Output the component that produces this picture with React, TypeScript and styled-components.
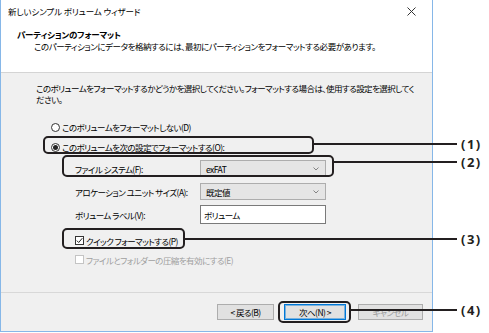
import styled, { createGlobalStyle, css } from "styled-components";

const GlobalStyle = createGlobalStyle`
  html, body {
    margin: 0;
    padding: 0;
    background: #ffffff;
  }
  body {
    font-family: "Noto Sans CJK JP", "Noto Sans", sans-serif;
    color: #000000;
  }
`;

const uiText = css`
  font-size: 8.5px;
  line-height: 12px;
  letter-spacing: -0.55px;
  font-feature-settings: "palt";
  white-space: nowrap;
`;

const Stage = styled.div`
  position: relative;
  width: 489px;
  height: 333px;
  overflow: hidden;
  background: #ffffff;
`;

const Window = styled.div`
  width: 433px;
  height: 332px;
  box-sizing: border-box;
  border: 1px solid #86b7e8;
  border-top: none;
  display: flex;
  flex-direction: column;
  background: #ffffff;
`;

const Header = styled.div`
  height: 73px;
  box-sizing: border-box;
  border-bottom: 1px solid #d4d4d4;
  padding: 5px 0 0 7px;
`;

const TitleRow = styled.div`
  ${uiText};
  letter-spacing: -0.1px;
  display: flex;
  align-items: center;
  justify-content: space-between;
  padding-right: 16px;
`;

const CloseIcon = () => (
  <svg width="9" height="9" viewBox="0 0 9 9">
    <path d="M0.5 0.5 L8.5 8.5 M8.5 0.5 L0.5 8.5" stroke="#333" strokeWidth="1" />
  </svg>
);

const Heading = styled.div`
  ${uiText};
  letter-spacing: -0.2px;
  margin-top: 11px;
  padding-left: 9px;
  font-weight: bold;
`;

const SubText = styled.div`
  ${uiText};
  letter-spacing: -0.45px;
  padding-left: 26px;
`;

const Body = styled.div`
  flex: 1;
  background: #f0f0f0;
  padding: 10px 0 0 35px;
`;

const Intro = styled.p`
  ${uiText};
  line-height: 11px;
  margin: 0;
`;

const RadioList = styled.div`
  margin: 12px 0 0 15px;
`;

const OptionRow = styled.label<{ $h?: number; $disabled?: boolean }>`
  ${uiText};
  display: flex;
  align-items: center;
  gap: 2px;
  height: ${(p) => p.$h ?? 20}px;
  color: ${(p) => (p.$disabled ? "#a0a0a0" : "#000")};
`;

const RadioDot = styled.span<{ $checked?: boolean }>`
  width: 9px;
  height: 9px;
  box-sizing: border-box;
  border: 1px solid #333;
  border-radius: 50%;
  background: #fff;
  display: flex;
  align-items: center;
  justify-content: center;
  &::after {
    content: "";
    width: 5px;
    height: 5px;
    border-radius: 50%;
    background: ${(p) => (p.$checked ? "#222" : "transparent")};
  }
`;

const CheckBox = styled.span<{ $disabled?: boolean }>`
  width: 9px;
  height: 9px;
  box-sizing: border-box;
  border: 1px solid ${(p) => (p.$disabled ? "#c4c4c4" : "#333")};
  background: #fff;
  display: flex;
  align-items: center;
  justify-content: center;
`;

const CheckMark = () => (
  <svg width="7" height="7" viewBox="0 0 7 7">
    <path d="M0.8 3.6 L2.7 5.5 L6.3 1.2" fill="none" stroke="#222" strokeWidth="1" />
  </svg>
);

const SettingsGrid = styled.div`
  margin-left: 39px;
  display: grid;
  grid-template-columns: 125px 126px;
  grid-auto-rows: 23px;
  align-items: center;
`;

const FieldLabel = styled.span`
  ${uiText};
`;

const Combo = styled.div`
  ${uiText};
  height: 17px;
  box-sizing: border-box;
  border: 1px solid #adadad;
  background: #e5e5e5;
  display: flex;
  align-items: center;
  justify-content: space-between;
  padding: 0 6px 0 5px;
`;

const Chevron = () => (
  <svg width="6" height="4" viewBox="0 0 6 4">
    <path d="M0.5 0.5 L3 3 L5.5 0.5" fill="none" stroke="#777" strokeWidth="0.9" />
  </svg>
);

const TextBox = styled.div`
  ${uiText};
  height: 19px;
  box-sizing: border-box;
  border: 1px solid #7a7a7a;
  background: #fff;
  padding-left: 3px;
  display: flex;
  align-items: center;
`;

const CheckList = styled.div`
  margin: 5px 0 0 39px;
`;

const Footer = styled.div`
  height: 39px;
  box-sizing: border-box;
  border-top: 1px solid #d8d8d8;
  background: #f0f0f0;
  display: flex;
  justify-content: flex-end;
  align-items: flex-start;
  padding: 11px 9px 0 0;
`;

const Button = styled.div<{ $w: number; $gap?: number; $primary?: boolean; $disabled?: boolean }>`
  ${uiText};
  width: ${(p) => p.$w}px;
  height: 16px;
  box-sizing: border-box;
  margin-right: ${(p) => p.$gap ?? 0}px;
  border: 1px solid ${(p) => (p.$primary ? "#0078d7" : "#adadad")};
  box-shadow: ${(p) => (p.$primary ? "inset 0 0 0 1px rgba(0,120,215,0.45)" : "none")};
  background: #e1e1e1;
  color: ${(p) => (p.$disabled ? "#9a9a9a" : "#000")};
  display: flex;
  align-items: center;
  justify-content: center;
`;

const CalloutBox = styled.div<{ $x: number; $y: number; $w: number; $h: number }>`
  position: absolute;
  left: ${(p) => p.$x}px;
  top: ${(p) => p.$y}px;
  width: ${(p) => p.$w}px;
  height: ${(p) => p.$h}px;
  box-sizing: border-box;
  border: 2px solid #231f20;
  border-radius: 5px;
`;

const Leader = styled.div<{ $x: number; $y: number }>`
  position: absolute;
  left: ${(p) => p.$x}px;
  top: ${(p) => p.$y}px;
  width: ${(p) => 457 - p.$x}px;
  height: 2px;
  background: #231f20;
`;

const CalloutLabel = styled.div<{ $y: number }>`
  position: absolute;
  left: 461px;
  top: ${(p) => p.$y - 9}px;
  height: 18px;
  line-height: 18px;
  font-family: "Open Sans", "Noto Sans", sans-serif;
  font-weight: bold;
  font-size: 13px;
  letter-spacing: 1.5px;
  color: #231f20;
`;

interface CalloutProps {
  x: number;
  y: number;
  w: number;
  h: number;
  lineY: number;
  label: string;
}

function Callout({ x, y, w, h, lineY, label }: CalloutProps) {
  return (
    <>
      <CalloutBox $x={x} $y={y} $w={w} $h={h} />
      <Leader $x={x + w} $y={lineY} />
      <CalloutLabel $y={lineY + 1}>{label}</CalloutLabel>
    </>
  );
}

const callouts: CalloutProps[] = [
  { x: 43, y: 136, w: 271, h: 18, lineY: 143, label: "(1)" },
  { x: 62, y: 155, w: 272, h: 22, lineY: 161, label: "(2)" },
  { x: 62, y: 228, w: 123, h: 21, lineY: 238, label: "(3)" },
  { x: 278, y: 301, w: 73, h: 22, lineY: 309, label: "(4)" },
];

export default function App() {
  return (
    <Stage>
      <GlobalStyle />
      <Window>
        <Header>
          <TitleRow>
            <span>新しいシンプル ボリューム ウィザード</span>
            <CloseIcon />
          </TitleRow>
          <Heading>パーティションのフォーマット</Heading>
          <SubText>
            このパーティションにデータを格納するには、最初にパーティションをフォーマットする必要があります。
          </SubText>
        </Header>
        <Body>
          <Intro>
            このボリュームをフォーマットするかどうかを選択してください。フォーマットする場合は、使用する設定を選択してく
            <br />
            ださい。
          </Intro>
          <RadioList>
            <OptionRow>
              <RadioDot />
              このボリュームをフォーマットしない(D)
            </OptionRow>
            <OptionRow>
              <RadioDot $checked />
              このボリュームを次の設定でフォーマットする(O):
            </OptionRow>
          </RadioList>
          <SettingsGrid>
            <FieldLabel>ファイル システム(F):</FieldLabel>
            <Combo>
              exFAT
              <Chevron />
            </Combo>
            <FieldLabel>アロケーション ユニット サイズ(A):</FieldLabel>
            <Combo>
              既定値
              <Chevron />
            </Combo>
            <FieldLabel>ボリューム ラベル(V):</FieldLabel>
            <TextBox>ボリューム</TextBox>
          </SettingsGrid>
          <CheckList>
            <OptionRow $h={19}>
              <CheckBox>
                <CheckMark />
              </CheckBox>
              クイック フォーマットする(P)
            </OptionRow>
            <OptionRow $h={19} $disabled>
              <CheckBox $disabled />
              ファイルとフォルダーの圧縮を有効にする(E)
            </OptionRow>
          </CheckList>
        </Body>
        <Footer>
          <Button $w={57} $gap={10}>
            &lt; 戻る(B)
          </Button>
          <Button $w={62} $gap={12} $primary>
            次へ(N) &gt;
          </Button>
          <Button $w={65} $disabled>
            キャンセル
          </Button>
        </Footer>
      </Window>
      {callouts.map((c) => (
        <Callout key={c.label} {...c} />
      ))}
    </Stage>
  );
}
